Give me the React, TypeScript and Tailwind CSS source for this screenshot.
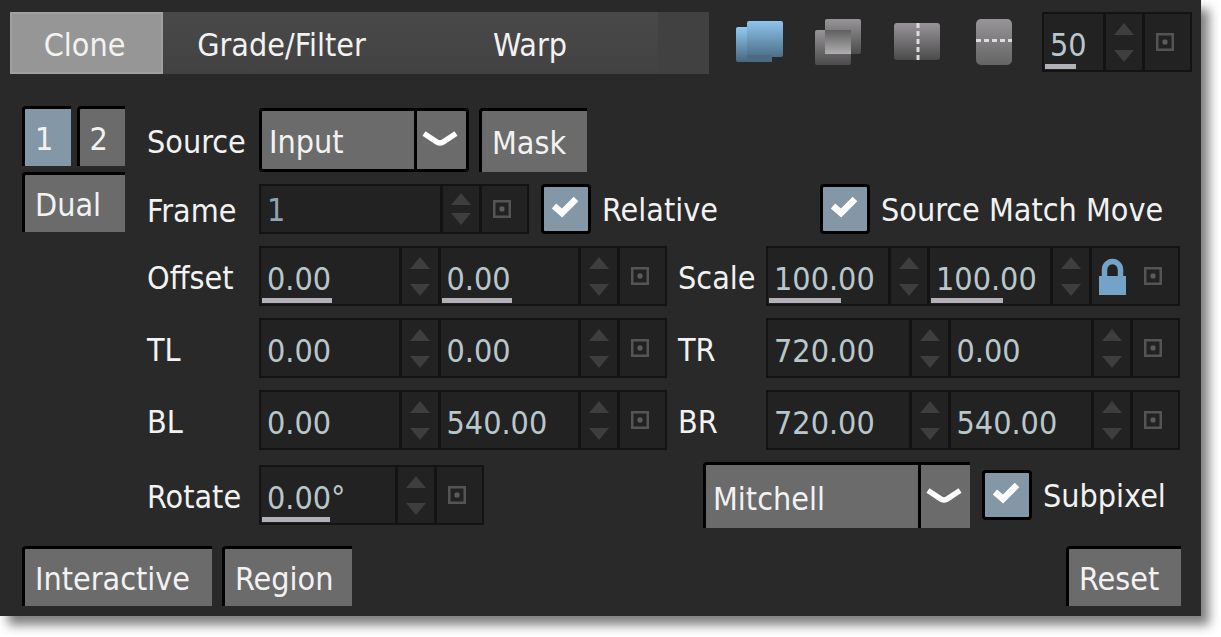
import { useState } from "react";
import type { ReactNode } from "react";

function Button({ children, className = "" }: { children: ReactNode; className?: string }) {
  return (
    <button
      type="button"
      className={`flex h-[60px] items-center rounded-tl border-t-3 border-l-3 border-black bg-[#6b6b6b] pt-0.5 pl-2.5 whitespace-nowrap ${className}`}
    >
      {children}
    </button>
  );
}

function Chevron() {
  return (
    <svg viewBox="0 0 36 18" className="mr-1 mb-0.5 h-[18px] w-9" aria-hidden="true">
      <path d="M2 3.5 L14 11.5 Q18 14.5 22 11.5 L34 3.5" fill="none" stroke="#fff" strokeWidth="5.5" />
    </svg>
  );
}

function Select({ label, options, id, className = "" }: { label: string; options: string[]; id: string; className?: string }) {
  return (
    <div className={`grid border-black bg-[#6b6b6b] ${className}`}>
      <select
        id={id}
        aria-label={label}
        className="col-start-1 row-start-1 w-full appearance-none bg-transparent pt-1 pr-14 pl-[7px] outline-none"
      >
        {options.map((o) => (
          <option key={o}>{o}</option>
        ))}
      </select>
      <span className="pointer-events-none col-start-1 row-start-1 flex w-13 items-center justify-center justify-self-end border-l-3 border-black">
        <Chevron />
      </span>
    </div>
  );
}

function Check({ id, label }: { id: string; label: string }) {
  const [on, setOn] = useState(true);
  return (
    <label htmlFor={id} className="flex items-center gap-[11px] whitespace-nowrap">
      <span className="grid">
        <input
          id={id}
          type="checkbox"
          checked={on}
          onChange={() => setOn(!on)}
          className="col-start-1 row-start-1 size-[50px] appearance-none rounded border-3 border-black bg-[#6b6b6b] checked:bg-[#8497a6]"
        />
        {on && (
          <svg viewBox="0 0 50 50" className="pointer-events-none col-start-1 row-start-1 size-[50px]" aria-hidden="true">
            <path d="M13 22 L21 29 L35 15" fill="none" stroke="#fff" strokeWidth="6.5" />
          </svg>
        )}
      </span>
      <span className="pt-0.5">{label}</span>
    </label>
  );
}

function Value({ label, value, bar, disabled = false }: { label: string; value: string; bar?: string; disabled?: boolean }) {
  return (
    <>
      <div className="relative flex min-w-0 flex-1 bg-[#222]">
        <input
          aria-label={label}
          defaultValue={value}
          disabled={disabled}
          className="w-full min-w-0 bg-transparent pt-1.5 pl-1.5 text-[#b9c7cd] outline-none disabled:pt-0.5 disabled:text-[#8fa3b0]"
        />
        {bar && <span className={`absolute bottom-px left-px h-[5px] bg-[#b4b0b8] ${bar}`} />}
      </div>
      <div className={`flex w-9 flex-col items-center justify-center bg-[#222] ${disabled ? "gap-2" : "gap-[15px]"}`}>
        <button type="button" aria-label={`Increase ${label}`} disabled={disabled}>
          <svg viewBox="0 0 20 12" className="h-3 w-5"><path d="M10 0 L20 12 H0Z" fill="#3e3e3e" /></svg>
        </button>
        <button type="button" aria-label={`Decrease ${label}`} disabled={disabled}>
          <svg viewBox="0 0 20 12" className="h-3 w-5"><path d="M0 0 H20 L10 12Z" fill="#3e3e3e" /></svg>
        </button>
      </div>
    </>
  );
}

function KeyButton({ label, lock = false }: { label: string; lock?: boolean }) {
  return (
    <div className={`flex items-center bg-[#222] ${lock ? "w-[86px] justify-between pr-4 pl-[7px]" : "w-[45px] justify-center pr-1.5"}`}>
      {lock && (
        <button type="button" aria-label="Lock scale">
          <svg viewBox="0 0 27 37" className="h-[37px] w-[27px]">
            <path d="M5.5 19 V12 a8 8.5 0 0 1 16 0 V19" fill="none" stroke="#75a3c8" strokeWidth="5.5" />
            <rect x="0" y="18" width="27" height="19" fill="#75a3c8" />
          </svg>
        </button>
      )}
      <button type="button" aria-label={`Keyframe ${label}`}>
        <svg viewBox="0 0 18 18" className="size-[18px]">
          <rect x="1.25" y="1.25" width="15.5" height="15.5" fill="none" stroke="#545454" strokeWidth="2.5" />
          <rect x="6.5" y="6.5" width="5" height="5" rx="1.5" fill="#5c5c5c" />
        </svg>
      </button>
    </div>
  );
}

function Field({ children, className = "" }: { children: ReactNode; className?: string }) {
  return <div className={`flex min-w-0 gap-[3px] bg-[#131313] p-0.5 ${className}`}>{children}</div>;
}

type Cell = { value: string; bar?: string };

function PairField({ label, x, y, lock, className }: { label: string; x: Cell; y: Cell; lock?: boolean; className: string }) {
  return (
    <Field className={`h-[60px] ${className}`}>
      <Value label={`${label} X`} value={x.value} bar={x.bar} />
      <Value label={`${label} Y`} value={y.value} bar={y.bar} />
      <KeyButton label={label} lock={lock} />
    </Field>
  );
}

function RowLabel({ children }: { children: ReactNode }) {
  return <span className="w-28 shrink-0 pt-1">{children}</span>;
}

const pairs: { left: string; lx: Cell; ly: Cell; right: string; rx: Cell; ry: Cell; lock?: boolean }[] = [
  {
    left: "Offset",
    lx: { value: "0.00", bar: "w-[70px]" },
    ly: { value: "0.00", bar: "w-[70px]" },
    right: "Scale",
    rx: { value: "100.00", bar: "w-[72px]" },
    ry: { value: "100.00", bar: "w-[72px]" },
    lock: true,
  },
  { left: "TL", lx: { value: "0.00" }, ly: { value: "0.00" }, right: "TR", rx: { value: "720.00" }, ry: { value: "0.00" } },
  { left: "BL", lx: { value: "0.00" }, ly: { value: "540.00" }, right: "BR", rx: { value: "720.00" }, ry: { value: "540.00" } },
];

function BlendIcons() {
  return (
    <div className="flex w-[277px] shrink-0 items-center justify-between">
      <button type="button" aria-label="Replace">
        <svg viewBox="0 0 48 48" className="size-12">
          <defs>
            <linearGradient id="blueFront" x1="0" y1="0" x2="0" y2="1">
              <stop offset="0" stopColor="#8ec5ee" />
              <stop offset="1" stopColor="#4c6f88" />
            </linearGradient>
            <linearGradient id="blueBack" x1="0" y1="0" x2="0" y2="1">
              <stop offset="0" stopColor="#92caf3" />
              <stop offset="1" stopColor="#47677f" />
            </linearGradient>
          </defs>
          <rect x="0" y="9" width="36" height="35" rx="2" fill="url(#blueBack)" />
          <rect x="11" y="3" width="36" height="36" rx="2" fill="url(#blueFront)" />
          <rect x="11" y="37" width="25" height="7" rx="1" fill="#4a6b83" />
        </svg>
      </button>
      <button type="button" aria-label="Overlay">
        <svg viewBox="0 0 48 48" className="size-12">
          <defs>
            <linearGradient id="grey" x1="0" y1="0" x2="0" y2="1">
              <stop offset="0" stopColor="#979597" />
              <stop offset="1" stopColor="#4c4b4c" />
            </linearGradient>
            <linearGradient id="greyOverlap" x1="0" y1="0" x2="0" y2="1">
              <stop offset="0" stopColor="#605f60" />
              <stop offset="1" stopColor="#b0aeb0" />
            </linearGradient>
          </defs>
          <rect x="10" y="1" width="36" height="35" rx="2" fill="url(#grey)" />
          <rect x="0" y="12" width="36" height="35" rx="2" fill="url(#grey)" />
          <rect x="10" y="12" width="26" height="24" fill="url(#greyOverlap)" />
        </svg>
      </button>
      <button type="button" aria-label="Split vertically">
        <svg viewBox="0 0 50 48" className="h-12 w-[50px]">
          <rect x="0" y="5" width="46" height="37" rx="3" fill="url(#grey)" />
          <path d="M24 5 V42" stroke="#dedcde" strokeWidth="3" strokeDasharray="5 3" />
        </svg>
      </button>
      <button type="button" aria-label="Split horizontally">
        <svg viewBox="0 0 38 48" className="h-12 w-[38px]">
          <defs>
            <linearGradient id="greySoft" x1="0" y1="0" x2="0" y2="1">
              <stop offset="0" stopColor="#979597" />
              <stop offset="1" stopColor="#656465" />
            </linearGradient>
          </defs>
          <rect x="1" y="1" width="36" height="46" rx="5" fill="url(#greySoft)" />
          <path d="M1 22.5 H37" stroke="#dedcde" strokeWidth="3" strokeDasharray="5 3" />
        </svg>
      </button>
    </div>
  );
}

export default function App() {
  return (
    <div className="bg-white pr-5 pb-5">
      <main className="min-w-[1180px] bg-[#292929] pb-2.5 font-['DejaVu_Sans_Condensed','DejaVu_Sans',sans-serif] text-[32px] leading-10 text-[#f2f2f2] shadow-[8px_9px_10px_0px_rgba(0,0,0,0.5)]">
        <header className="flex items-start pt-3 pr-[9px] pl-2.5">
          <nav className="grid h-[62px] min-w-0 flex-1 grid-cols-[153fr_239fr_256fr_51fr] bg-linear-to-b from-[#494949] to-[#424242]">
            <button type="button" className="border-2 border-[#a0a0a0] bg-[#969696] pt-1 pr-1">Clone</button>
            <button type="button" className="pt-1 pr-0.5">Grade/Filter</button>
            <button type="button" className="pt-1">Warp</button>
            <span className="bg-[#414141]" />
          </nav>
          <div className="flex h-[60px] items-center pl-[27px]">
            <BlendIcons />
            <Field className="ml-[29px] h-[60px] w-[150px] shrink-0">
              <Value label="Opacity" value="50" bar="w-[31px]" />
              <KeyButton label="Opacity" />
            </Field>
          </div>
        </header>

        <section className="flex pt-8 pr-[21px] pl-[22px]">
          <div className="flex w-[103px] shrink-0 flex-col gap-1.5">
            <div className="flex gap-1.5">
              <Button className="flex-1 bg-[#8497a6]!">1</Button>
              <Button className="flex-1">2</Button>
            </div>
            <Button>Dual</Button>
          </div>

          <div className="ml-[22px] flex min-w-0 flex-1 flex-col gap-3 pt-0.5">
            <div className="flex items-center">
              <RowLabel>Source</RowLabel>
              <Select id="source" label="Source" options={["Input", "Output"]} className="h-16 w-[210px] rounded border-3" />
              <Button className="ml-2.5 h-16! w-[108px]">Mask</Button>
            </div>

            <div className="flex items-center">
              <RowLabel>Frame</RowLabel>
              <Field className="mr-3 h-[50px] w-[270px]">
                <Value label="Frame" value="1" disabled />
                <KeyButton label="Frame" />
              </Field>
              <Check id="relative" label="Relative" />
              <div className="ml-auto w-[360px]">
                <Check id="match-move" label="Source Match Move" />
              </div>
            </div>

            {pairs.map((p) => (
              <div key={p.left} className="flex items-center">
                <RowLabel>{p.left}</RowLabel>
                <PairField label={p.left} x={p.lx} y={p.ly} className="flex-[408]" />
                <span className="ml-[11px] w-[88px] shrink-0 pt-1">{p.right}</span>
                <PairField label={p.right} x={p.rx} y={p.ry} lock={p.lock} className="flex-[414]" />
              </div>
            ))}

            <div className="flex items-center">
              <RowLabel>Rotate</RowLabel>
              <Field className="h-[60px] w-[225px]">
                <Value label="Rotate" value="0.00°" bar="w-[68px]" />
                <KeyButton label="Rotate" />
              </Field>
              <div className="ml-auto flex w-[477px] items-center gap-3">
                <Select id="filter" label="Filter" options={["Mitchell", "Catmull"]} className="h-[66px] w-[267px] rounded-tl border-t-3 border-l-3" />
                <Check id="subpixel" label="Subpixel" />
              </div>
            </div>
          </div>
        </section>

        <footer className="mt-[18px] flex gap-2.5 pr-5 pl-[22px]">
          <Button className="w-[190px]">Interactive</Button>
          <Button className="w-[130px]">Region</Button>
          <Button className="ml-auto w-[115px]">Reset</Button>
        </footer>
      </main>
    </div>
  );
}
